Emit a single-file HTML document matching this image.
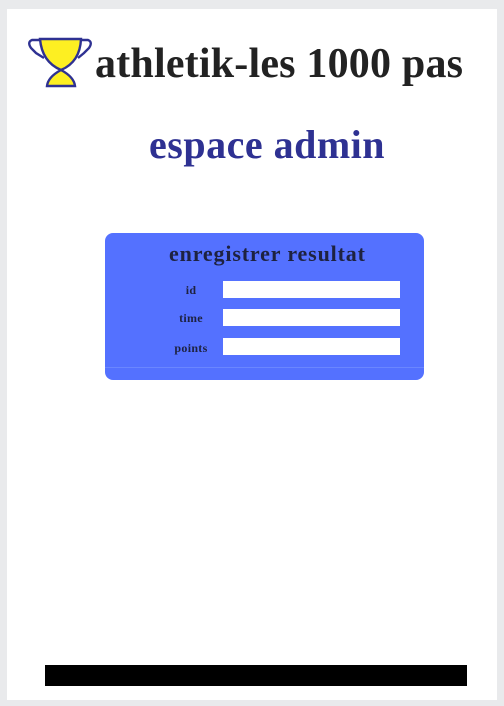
<!DOCTYPE html>
<html><head><style>
body{margin:0;width:504px;height:706px;background:#e9eaec;position:relative;overflow:hidden;font-family:"Liberation Serif",serif;}
.panel{position:absolute;left:7px;top:9px;width:490px;height:691px;background:#fff;}
.t{position:absolute;white-space:nowrap;font-weight:bold;}
.box{position:absolute;left:105px;top:233px;width:319px;height:147px;background:#5471ff;border-radius:8px;}
.in{position:absolute;left:223px;width:177px;height:17px;background:#fff;}
.lab{position:absolute;width:60px;text-align:center;left:161px;font-size:12px;font-weight:bold;color:#1e2240;letter-spacing:0.3px;}
</style></head><body>
<div class="panel"></div>
<svg style="position:absolute;left:0;top:0" width="100" height="100">
<path d="M40 39 L81 39 Q80 62 61 70 Q42 62 40 39Z" fill="#fdef22" stroke="#2e3192" stroke-width="2.4"/>
<path d="M61 70 Q48 77 47 86 L75 86 Q74 77 61 70Z" fill="#fdef22" stroke="#2e3192" stroke-width="2.4"/>
<path d="M40 40 L32 40 Q27 42 31 48 L36 53 L44 58" fill="none" stroke="#2e3192" stroke-width="2.4"/>
<path d="M81 40 L88 40 Q93 42 89 48 L84 53 L78 58" fill="none" stroke="#2e3192" stroke-width="2.4"/>
</svg>
<div class="t" style="left:95px;top:40px;font-size:42px;color:#222;letter-spacing:0.2px;">athletik-les 1000 pas</div>
<div class="t" style="left:149px;top:121px;font-size:40px;color:#2e3192;letter-spacing:0.5px;">espace admin</div>
<div class="box">
<div style="position:absolute;left:0;right:0;bottom:12px;border-top:1px solid #6a86ff;"></div>
</div>
<div class="t" style="left:169px;top:241px;font-size:22px;color:#1e2240;letter-spacing:0.85px;">enregistrer resultat</div>
<div class="lab" style="top:283px">id</div>
<div class="lab" style="top:311px">time</div>
<div class="lab" style="top:341px">points</div>
<div class="in" style="top:281px"></div>
<div class="in" style="top:309px"></div>
<div class="in" style="top:338px"></div>
<div style="position:absolute;left:45px;top:665px;width:422px;height:21px;background:#000;"></div>
</body></html>
